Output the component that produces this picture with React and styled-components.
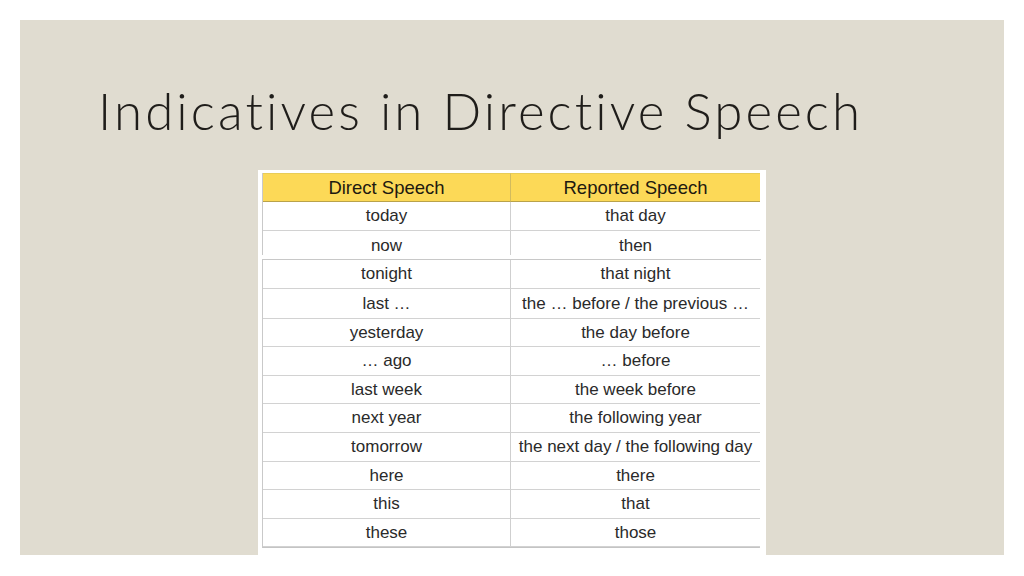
import React from "react";
import styled, { createGlobalStyle } from "styled-components";

const Global = createGlobalStyle`
  html, body { margin: 0; padding: 0; background: #ffffff; }
  #root { width: 1024px; height: 576px; }
`;

const Page = styled.div`
  width: 1024px;
  height: 576px;
  padding: 20px 20px 0 20px;
  box-sizing: border-box;
  background: #ffffff;
`;

const Slide = styled.div`
  width: 984px;
  height: 535px;
  background: #e0dcd0;
  display: flex;
  flex-direction: column;
`;

const Title = styled.h1`
  margin: 0;
  padding: 61px 0 0 78px;
  height: 150px;
  box-sizing: border-box;
  font-family: "Lato", "Liberation Sans", sans-serif;
  font-weight: 300;
  font-size: 51px;
  letter-spacing: 3.1px;
  line-height: 60px;
  color: #1f1d1a;
  white-space: nowrap;
`;

const ImageBox = styled.div`
  margin-left: 238px;
  width: 508px;
  flex: 1;
  background: #ffffff;
  padding: 3px 6px 0 4px;
  box-sizing: border-box;
`;

const Table = styled.div`
  display: grid;
  grid-template-columns: 248px 249px;
  border-left: 1px solid #c9c9c9;
  border-right: 1px solid #c9c9c9;
  border-bottom: 1px solid #c4c4c4;
  font-family: "Liberation Sans", Arial, sans-serif;
  color: #2a2a2a;
`;

const HeadCell = styled.div`
  height: 29px;
  box-sizing: border-box;
  background: #fcd957;
  border-bottom: 1px solid #b9a24a;
  border-right: ${(p) => (p.$last ? "none" : "1px solid #d2bb5e")};
  border-top: 1px solid #e8cc58;
  display: flex;
  align-items: center;
  justify-content: center;
  font-size: 18.5px;
  color: #1e1a10;
`;

const Cell = styled.div`
  height: ${(p) => p.$h}px;
  box-sizing: border-box;
  padding-top: ${(p) => (p.$gap ? 5 : 0)}px;
  border-bottom: ${(p) => (p.$gap ? "none" : "1px solid #d2d2d2")};
  border-right: ${(p) => (p.$last ? "none" : "1px solid #cfcfcf")};
  display: flex;
  align-items: center;
  justify-content: center;
  font-size: 17px;
  white-space: nowrap;
  background: #ffffff;
`;

const Gap = styled.div`
  grid-column: 1 / span 2;
  height: 4px;
  background: #ffffff;
  border-bottom: 1px solid #c8c8c8;
  margin: 0 -1px;
`;

const rows = [
  ["today", "that day", 29],
  ["now", "then", 24, true],
  ["tonight", "that night", 29],
  ["last \u2026", "the \u2026  before / the previous \u2026", 30],
  ["yesterday", "the day before", 28],
  ["\u2026 ago", "\u2026 before", 29],
  ["last week", "the week before", 28],
  ["next year", "the following year", 29],
  ["tomorrow", "the next day / the following day", 29],
  ["here", "there", 28],
  ["this", "that", 29],
  ["these", "those", 28],
];

export default function App() {
  return (
    <>
      <Global />
      <Page>
        <Slide>
          <Title>Indicatives in Directive Speech</Title>
          <ImageBox>
            <Table>
              <HeadCell>Direct Speech</HeadCell>
              <HeadCell $last>Reported Speech</HeadCell>
              {rows.map(([a, b, h, gap]) => (
                <React.Fragment key={a}>
                  <Cell $h={h} $gap={gap}>{a}</Cell>
                  <Cell $h={h} $gap={gap} $last>{b}</Cell>
                  {gap && <Gap />}
                </React.Fragment>
              ))}
            </Table>
          </ImageBox>
        </Slide>
      </Page>
    </>
  );
}
